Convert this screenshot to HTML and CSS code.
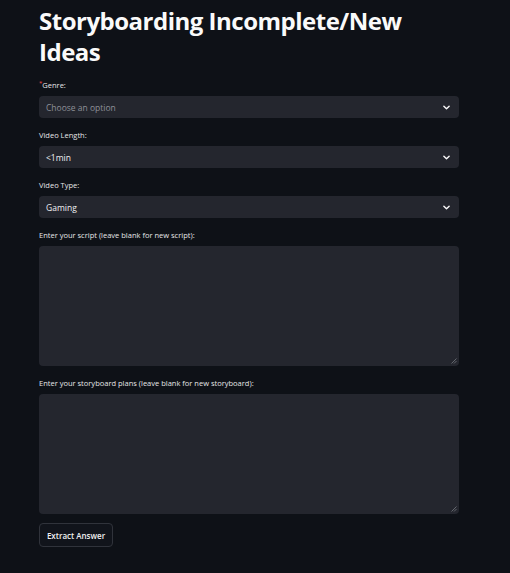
FILE: index.html
```html
<!DOCTYPE html>
<html lang="en">
<head>
<meta charset="utf-8">
<title>Storyboarding Incomplete/New Ideas</title>
<link rel="stylesheet" href="styles.css">
</head>
<body>
<main class="page">
  <h1 class="title">Storyboarding Incomplete/New Ideas</h1>

  <div class="field">
    <label class="label"><span class="req">*</span>Genre:</label>
    <div class="select">
      <span class="placeholder">Choose an option</span>
      <svg class="chev" viewBox="0 0 8 5" width="7" height="5"><path d="M1 1 L4 4 L7 1" fill="none" stroke="#fafafa" stroke-width="1.6" stroke-linecap="round" stroke-linejoin="round"/></svg>
    </div>
  </div>

  <div class="field">
    <label class="label">Video Length:</label>
    <div class="select">
      <span class="value">&lt;1min</span>
      <svg class="chev" viewBox="0 0 8 5" width="7" height="5"><path d="M1 1 L4 4 L7 1" fill="none" stroke="#fafafa" stroke-width="1.6" stroke-linecap="round" stroke-linejoin="round"/></svg>
    </div>
  </div>

  <div class="field">
    <label class="label">Video Type:</label>
    <div class="select">
      <span class="value">Gaming</span>
      <svg class="chev" viewBox="0 0 8 5" width="7" height="5"><path d="M1 1 L4 4 L7 1" fill="none" stroke="#fafafa" stroke-width="1.6" stroke-linecap="round" stroke-linejoin="round"/></svg>
    </div>
  </div>

  <div class="field">
    <label class="label tlabel">Enter your script (leave blank for new script):</label>
    <div class="textarea">
      <svg class="grip" viewBox="0 0 6 6" width="6" height="6"><path d="M5.5 0.5 L0.5 5.5 M5.5 3 L3 5.5" stroke="#6b6d75" stroke-width="0.9"/></svg>
    </div>
  </div>

  <div class="field">
    <label class="label tlabel">Enter your storyboard plans (leave blank for new storyboard):</label>
    <div class="textarea">
      <svg class="grip" viewBox="0 0 6 6" width="6" height="6"><path d="M5.5 0.5 L0.5 5.5 M5.5 3 L3 5.5" stroke="#6b6d75" stroke-width="0.9"/></svg>
    </div>
  </div>

  <button class="btn" type="button">Extract Answer</button>
</main>
</body>
</html>
```
FILE: styles.css
```css
* { box-sizing: border-box; }
html, body {
  margin: 0;
  padding: 0;
  background: #0e1117;
  height: 100%;
}
body {
  font-family: "Open Sans", "Noto Sans", "Liberation Sans", sans-serif;
  color: #fafafa;
}
.page {
  width: 420px;
  margin-left: 39px;
  padding-top: 5px;
  display: flex;
  flex-direction: column;
}
.title {
  margin: 0 0 12px 0;
  font-size: 24px;
  line-height: 31px;
  font-weight: 700;
  letter-spacing: -0.5px;
  color: #fafafa;
}
.field {
  display: flex;
  flex-direction: column;
  margin-bottom: 11px;
}
.label {
  font-size: 7.5px;
  line-height: 12px;
  margin-bottom: 5px;
  color: #e6e6e8;
}
.req {
  color: #ff4b4b;
  font-size: 6px;
  vertical-align: top;
  line-height: 8px;
}
.select {
  position: relative;
  height: 22px;
  background: #24262e;
  border-radius: 4px;
  display: flex;
  align-items: center;
  justify-content: space-between;
  padding: 0 9px 0 7px;
  font-size: 8.5px;
}
.placeholder { color: #8e9098; }
.value { color: #f0f0f2; }
.chev { display: block; }
.textarea {
  position: relative;
  height: 120px;
  background: #24262e;
  border-radius: 4px;
}
.grip {
  position: absolute;
  right: 2px;
  bottom: 2px;
}
.btn {
  align-self: flex-start;
  margin-top: -2px;
  width: 74px;
  height: 24px;
  background: #11141b;
  border: 1px solid #30333b;
  border-radius: 4px;
  color: #f0f0f2;
  font-family: "Open Sans", "Noto Sans", "Liberation Sans", sans-serif;
  font-size: 8px;
  font-weight: 600;
  padding: 0;
}
```
